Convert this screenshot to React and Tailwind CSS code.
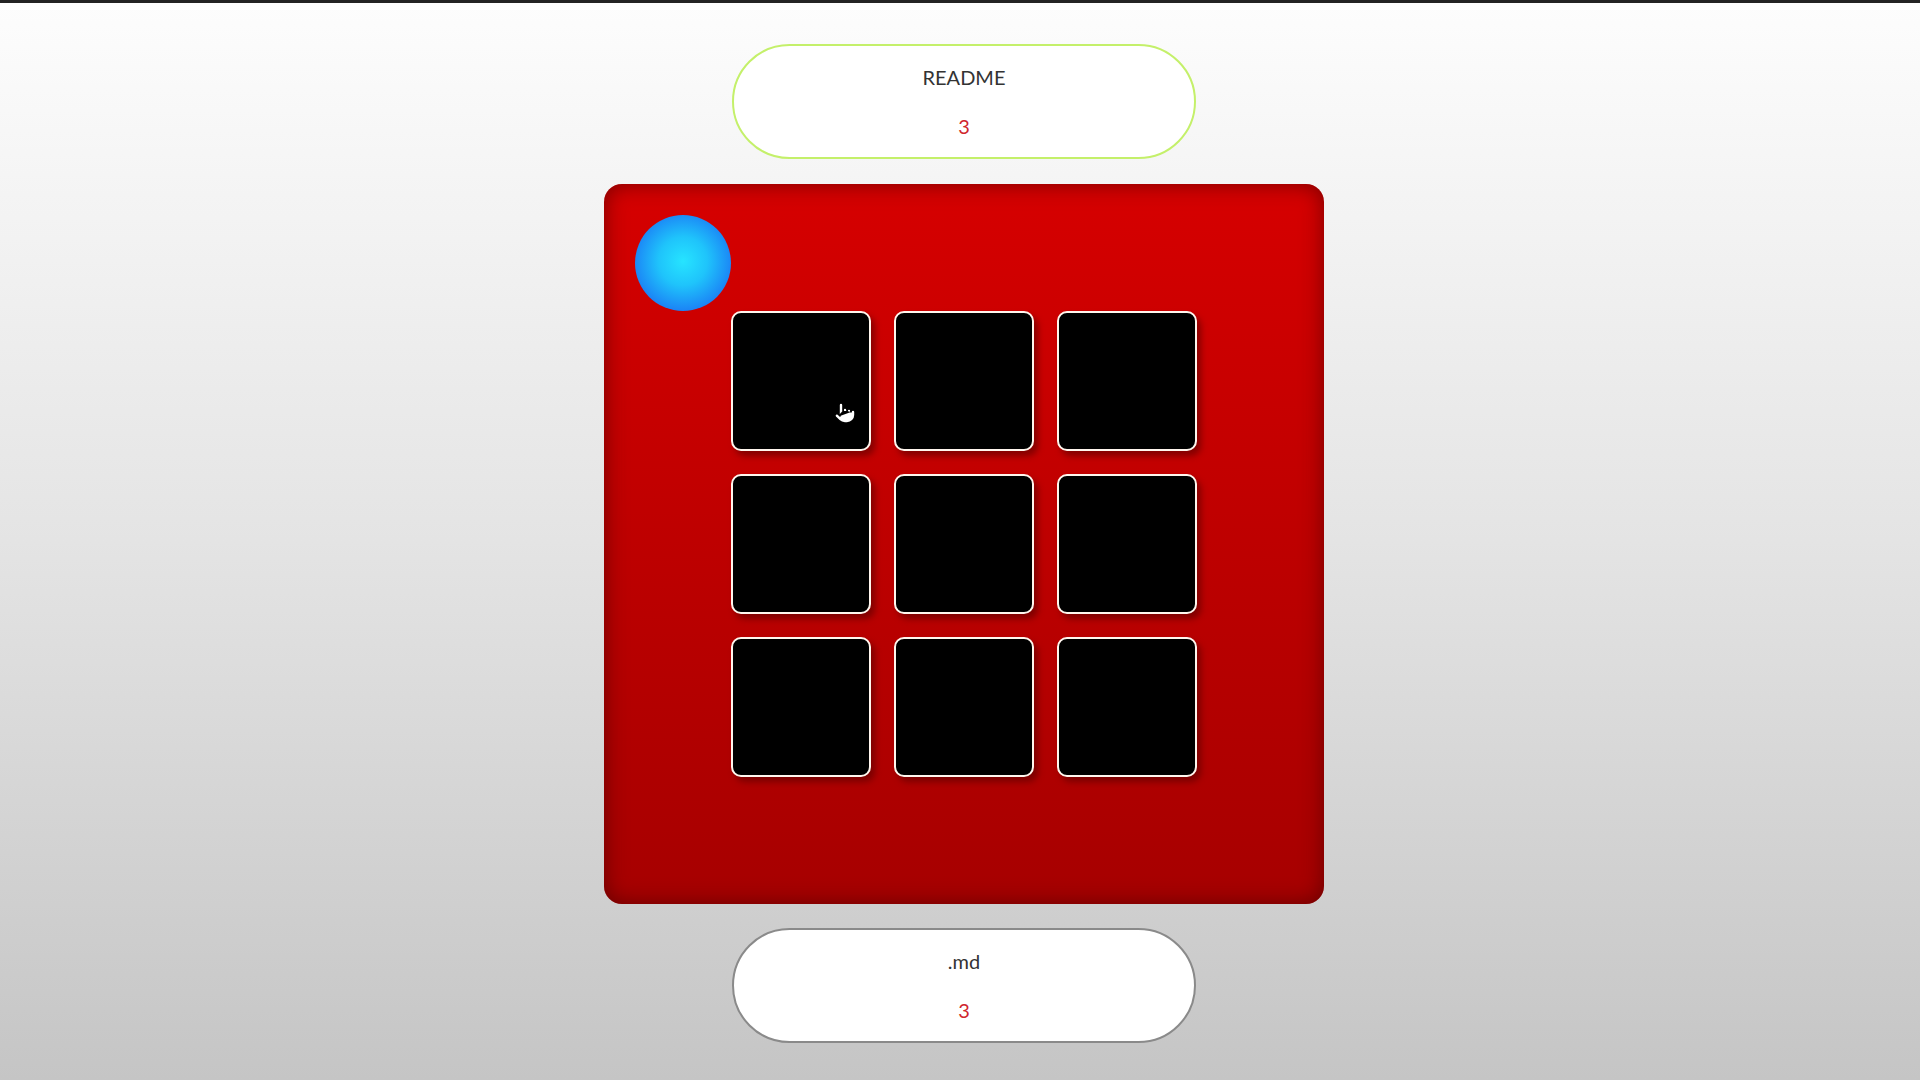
import { Pointer } from 'lucide-react'

function Pill({ label, value, border }) {
  return (
    <div
      className={`w-[464px] h-[115px] rounded-full bg-white border-2 ${border} flex flex-col items-center justify-center gap-[29px]`}
    >
      <div className="text-[20px] leading-none text-[#333]">{label}</div>
      <div className="text-[20px] leading-none text-[#d0262e]">{value}</div>
    </div>
  )
}

function Tile({ children }) {
  return (
    <div className="relative w-[140px] h-[140px] bg-black border-2 border-[#fff6ee] rounded-[10px] shadow-[4px_5px_6px_rgba(90,0,0,0.6)]">
      {children}
    </div>
  )
}

export default function App() {
  return (
    <div
      className="min-h-[1080px] h-[1080px] w-full border-t-[3px] border-[#222] bg-gradient-to-b from-[#fdfdfd] via-[#e4e4e4] to-[#c5c5c5] flex flex-col items-center pt-[41px] pl-2"
      style={{ fontFamily: 'Lato, "DejaVu Sans", sans-serif' }}
    >
      <Pill label="README" value="3" border="border-[#c4f06a]" />

      <div className="relative mt-[25px] w-[720px] h-[720px] rounded-[18px] bg-gradient-to-b from-[#d60000] to-[#a60000] shadow-[inset_0_0_22px_rgba(60,0,0,0.6)] flex items-center justify-center">
        <div className="absolute left-[31px] top-[31px] w-[96px] h-[96px] rounded-full bg-[radial-gradient(circle_at_50%_48%,#26e4ff_0%,#1fc4fb_35%,#1b7ef5_75%,#1a63f0_100%)]" />
        <div className="grid grid-cols-3 gap-[23px]">
          <Tile>
            <Pointer
              className="absolute left-[100px] top-[86px] w-[24px] h-[28px] text-black"
              fill="white"
              strokeWidth={1.6}
            />
          </Tile>
          {Array.from({ length: 8 }).map((_, i) => (
            <Tile key={i} />
          ))}
        </div>
      </div>

      <div className="mt-[24px]">
        <Pill label=".md" value="3" border="border-[#8a8a8a]" />
      </div>
    </div>
  )
}
